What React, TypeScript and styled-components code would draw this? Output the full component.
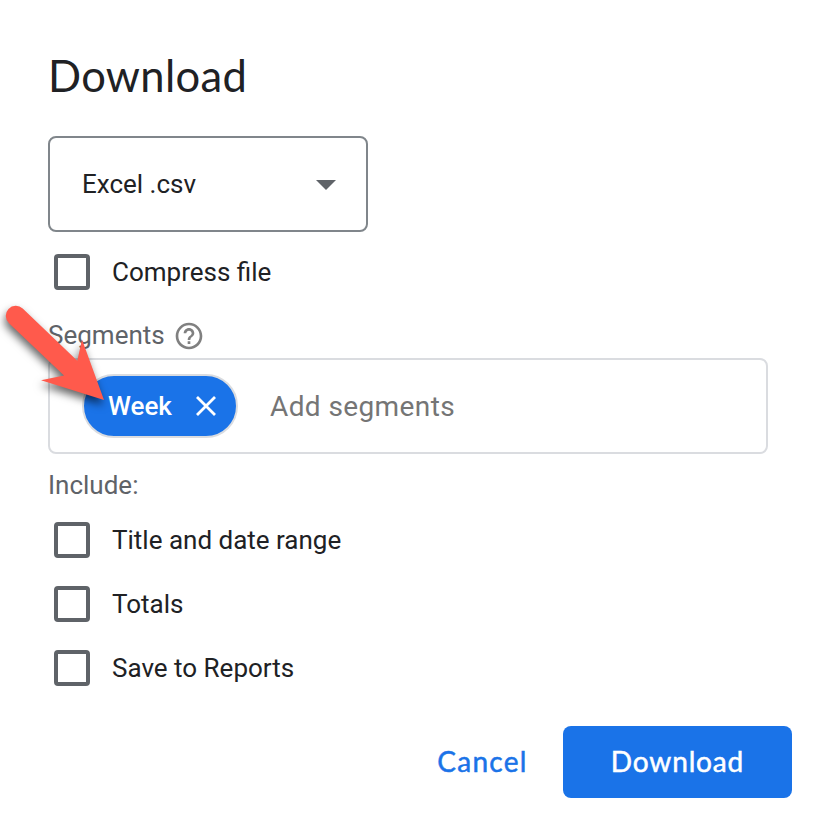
import React, { useState } from "react";
import styled, { createGlobalStyle } from "styled-components";
import { MdHelpOutline } from "react-icons/md";

const COLORS = {
  blue: "#1a73e8",
  text: "#202124",
  grey: "#5f6368",
  icon: "#808080",
  placeholder: "#757575",
  border: "#dadce0",
  selectBorder: "#80868b",
  red: "#ff5a4c",
  white: "#fff",
};

const GlobalStyle = createGlobalStyle`
  * {
    box-sizing: border-box;
  }
  body {
    margin: 0;
    background: ${COLORS.white};
    color: ${COLORS.text};
    font-family: Roboto, sans-serif;
    font-size: 26px;
  }
`;

const StyledDialog = styled.div`
  position: relative;
  display: flex;
  flex-direction: column;
  align-items: flex-start;
  width: 818px;
  height: 822px;
  padding: 47px 26px 24px 48px;
  overflow: hidden;
`;

const StyledTitle = styled.h1`
  margin: 0 0 33px;
  font-family: Lato, sans-serif;
  font-size: 43.5px;
  font-weight: 400;
  line-height: 56px;
  letter-spacing: 0.35px;
`;

const StyledSelect = styled.button`
  display: flex;
  align-items: center;
  justify-content: space-between;
  width: 320px;
  height: 96px;
  margin: 0 0 8px;
  padding: 0 30px 0 32px;
  border: 2px solid ${COLORS.selectBorder};
  border-radius: 8px;
  background: ${COLORS.white};
  color: ${COLORS.text};
  font: inherit;
  svg {
    margin-top: 2px;
  }
`;

const StyledCheckRow = styled.label`
  display: flex;
  align-items: center;
  gap: 22px;
  height: 64px;
  padding-left: 6px;
  line-height: 32px;
`;

const StyledCheckbox = styled.input`
  appearance: none;
  width: 36px;
  height: 36px;
  margin: 0;
  border: 4px solid ${COLORS.grey};
  border-radius: 4px;
  &:checked {
    background: ${COLORS.blue};
    border-color: ${COLORS.blue};
  }
`;

const StyledLabel = styled.div`
  display: flex;
  align-items: center;
  gap: 8px;
  height: 32px;
  margin: 16px 0 6px;
  color: ${COLORS.grey};
  line-height: 30px;
  svg {
    color: ${COLORS.icon};
  }
`;

const StyledLabelText = styled.span`
  padding-bottom: 2px;
`;

const StyledSegments = styled.div`
  display: flex;
  align-items: center;
  gap: 32px;
  width: 720px;
  height: 96px;
  padding-left: 32px;
  border: 2px solid ${COLORS.border};
  border-radius: 8px;
`;

const StyledChip = styled.span`
  display: flex;
  align-items: center;
  justify-content: space-between;
  width: 156px;
  height: 64px;
  padding: 0 20px 0 24px;
  border: 2px solid ${COLORS.border};
  border-radius: 32px;
  background: ${COLORS.blue};
  color: ${COLORS.white};
  font-weight: 500;
`;

const StyledInput = styled.input`
  flex: 1;
  min-width: 0;
  padding: 0;
  border: 0;
  outline: 0;
  background: transparent;
  font: inherit;
  font-size: 28px;
  letter-spacing: 0.4px;
  &::placeholder {
    color: ${COLORS.placeholder};
  }
`;

const StyledInclude = styled.div`
  height: 32px;
  margin: 15px 0 7px;
  color: ${COLORS.grey};
  line-height: 32px;
`;

const StyledFooter = styled.div`
  display: flex;
  align-self: stretch;
  justify-content: flex-end;
  gap: 19px;
  margin-top: auto;
`;

const StyledButton = styled.button<{ $primary?: boolean }>`
  width: ${({ $primary }) => ($primary ? 229 : 123)}px;
  height: 72px;
  padding: 0 0 3px;
  border: 0;
  border-radius: 8px;
  background: ${({ $primary }) => ($primary ? COLORS.blue : "transparent")};
  color: ${({ $primary }) => ($primary ? COLORS.white : COLORS.blue)};
  font-family: Lato, sans-serif;
  font-size: 28px;
  letter-spacing: ${({ $primary }) => ($primary ? 0.85 : 1.3)}px;
  -webkit-text-stroke: 0.5px currentColor;
`;

const StyledPointer = styled.svg`
  position: absolute;
  top: 290px;
  left: 0;
  filter: drop-shadow(-1px 5px 4px rgba(0, 0, 0, 0.6));
`;

function Checkbox({ label }: { label: string }) {
  const [checked, setChecked] = useState(false);
  return (
    <StyledCheckRow>
      <StyledCheckbox
        type="checkbox"
        checked={checked}
        onChange={() => setChecked(!checked)}
      />
      {label}
    </StyledCheckRow>
  );
}

export default function App() {
  return (
    <>
      <GlobalStyle />
      <StyledDialog>
        <StyledTitle>Download</StyledTitle>
        <StyledSelect>
          Excel .csv
          <svg width="20" height="10" viewBox="0 0 20 10">
            <path d="M0 0h20L10 10z" fill={COLORS.grey} />
          </svg>
        </StyledSelect>
        <Checkbox label="Compress file" />
        <StyledLabel>
          <StyledLabelText>Segments</StyledLabelText>
          <MdHelpOutline size={32} />
        </StyledLabel>
        <StyledSegments>
          <StyledChip>
            Week
            <svg width="20" height="20" viewBox="0 0 20 20">
              <path
                d="M1 1l18 18M19 1L1 19"
                stroke={COLORS.white}
                strokeWidth="2.8"
              />
            </svg>
          </StyledChip>
          <StyledInput placeholder="Add segments" />
        </StyledSegments>
        <StyledInclude>Include:</StyledInclude>
        <Checkbox label="Title and date range" />
        <Checkbox label="Totals" />
        <Checkbox label="Save to Reports" />
        <StyledFooter>
          <StyledButton>Cancel</StyledButton>
          <StyledButton $primary>Download</StyledButton>
        </StyledFooter>
        <StyledPointer width="120" height="130" viewBox="0 290 120 130">
          <path
            d="M22.7 308.5L77.3 360.7L82 339.5L104 400L41 380.3L64 375.4L9 323.2A10 10 0 0 1 22.7 308.5Z"
            fill={COLORS.red}
          />
        </StyledPointer>
      </StyledDialog>
    </>
  );
}
